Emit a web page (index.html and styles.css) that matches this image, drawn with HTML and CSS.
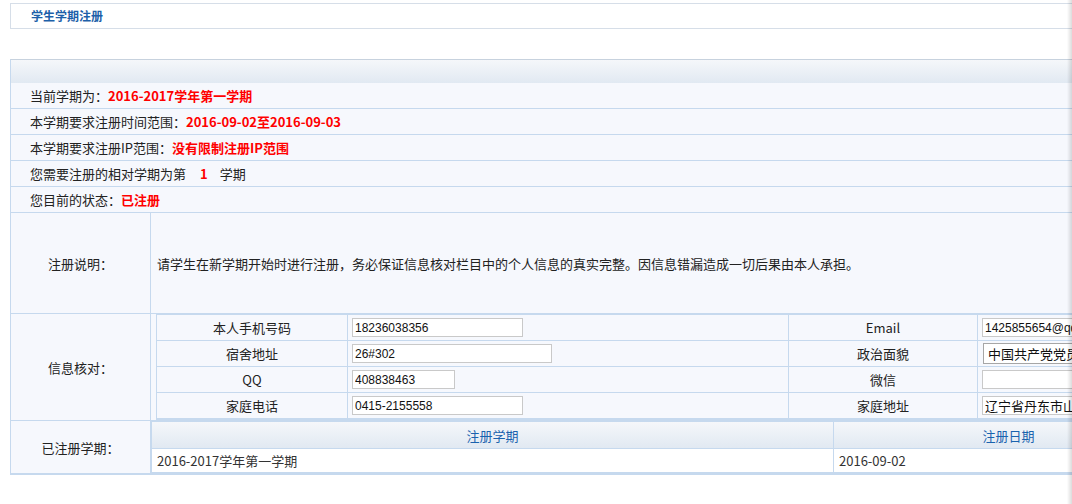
FILE: index.html
```html
<!DOCTYPE html>
<html lang="zh-CN">
<head>
  <meta charset="UTF-8">
  <title>学生学期注册</title>
  <link rel="stylesheet" href="styles.css">
</head>
<body>
  <div class="title-box">学生学期注册</div>

  <div class="panel">
    <div class="panel-head"></div>

    <div class="info-row">当前学期为：<span class="red">2016-2017学年第一学期</span></div>
    <div class="info-row">本学期要求注册时间范围：<span class="red">2016-09-02至2016-09-03</span></div>
    <div class="info-row">本学期要求注册IP范围：<span class="red">没有限制注册IP范围</span></div>
    <div class="info-row">您需要注册的相对学期为第<span class="red num">1</span>学期</div>
    <div class="info-row">您目前的状态：<span class="red">已注册</span></div>

    <div class="form-row note-row">
      <div class="form-label">注册说明：</div>
      <div class="form-body note-text">请学生在新学期开始时进行注册，务必保证信息核对栏目中的个人信息的真实完整。因信息错漏造成一切后果由本人承担。</div>
    </div>

    <div class="form-row">
      <div class="form-label">信息核对：</div>
      <div class="form-body check-wrap">
        <div class="check-grid">
          <div class="c-label">本人手机号码</div>
          <div class="c-field"><input class="txt w171" type="text" value="18236038356"></div>
          <div class="c-label">Email</div>
          <div class="c-field"><input class="txt w260" type="text" value="1425855654@qq.com"></div>

          <div class="c-label">宿舍地址</div>
          <div class="c-field"><input class="txt w200" type="text" value="26#302"></div>
          <div class="c-label">政治面貌</div>
          <div class="c-field"><select class="sel"><option>中国共产党党员</option></select></div>

          <div class="c-label">QQ</div>
          <div class="c-field"><input class="txt w103" type="text" value="408838463"></div>
          <div class="c-label">微信</div>
          <div class="c-field"><input class="txt w260" type="text" value=""></div>

          <div class="c-label">家庭电话</div>
          <div class="c-field"><input class="txt w171" type="text" value="0415-2155558"></div>
          <div class="c-label">家庭地址</div>
          <div class="c-field"><input class="txt w260 cjk" type="text" value="辽宁省丹东市山上街"></div>
        </div>
      </div>
    </div>

    <div class="form-row">
      <div class="form-label">已注册学期：</div>
      <div class="form-body">
        <div class="term-grid">
          <div class="t-head">注册学期</div>
          <div class="t-head">注册日期</div>
          <div class="t-cell">2016-2017学年第一学期</div>
          <div class="t-cell">2016-09-02</div>
        </div>
      </div>
    </div>
  </div>

  <div class="edge"></div>
</body>
</html>
```

FILE: styles.css
```css
body {
  margin: 0;
  font-family: "Noto Sans CJK SC", sans-serif;
  font-size: 13px;
  color: #222;
  background: #fff;
  overflow: hidden;
}

/* 标题栏 */
.title-box {
  margin: 3px 0 0 10px;
  width: 1400px;
  height: 24px;
  line-height: 24px;
  padding-left: 20px;
  border: 1px solid #d6dee8;
  color: #1d5fa9;
  font-size: 12px;
  font-weight: bold;
}

.panel {
  margin: 30px 0 0 10px;
  width: 1400px;
  border: 1px solid #c6d9ee;
  border-top-color: #c7d2de;
  border-right: none;
  background: #f6f8fd;
}

.panel-head {
  height: 23px;
  background: linear-gradient(#f5f7fa, #e1e9f2);
}

.info-row {
  height: 25px;
  line-height: 25px;
  padding-left: 19px;
  border-bottom: 1px solid #c6d9ee;
}

.red {
  color: #ff0000;
  font-weight: bold;
}

.num {
  padding: 0 12px 0 14px;
}

.form-row {
  display: flex;
  border-bottom: 1px solid #c6d9ee;
}

.form-label {
  width: 139px;
  flex: none;
  display: flex;
  align-items: center;
  justify-content: center;
  border-right: 1px solid #c6d9ee;
}

.form-body {
  flex: 1;
}

.note-row {
  height: 100px;
}

.note-text {
  display: flex;
  align-items: center;
  padding-left: 6px;
}

.check-wrap {
  padding-left: 5px;
}

/* 信息核对表 */
.check-grid {
  display: grid;
  grid-template-columns: 190px 440px 188px 400px;
  grid-auto-rows: 25px;
  gap: 1px;
  background: #c6d9ee;
  border: 1px solid #c6d9ee;
  border-right: none;
  border-bottom-width: 2px;
}

.c-label {
  background: #f6f8fd;
  display: flex;
  align-items: center;
  justify-content: center;
}

.c-field {
  background: #f6f8fd;
  display: flex;
  align-items: center;
  padding-left: 4px;
}

.txt {
  box-sizing: border-box;
  height: 19px;
  margin: 0;
  padding: 0 2px;
  border: 1px solid #c9c9c9;
  font-family: "Liberation Sans", sans-serif;
  font-size: 12px;
  color: #111;
  background: #fff;
  outline: none;
}

.txt.cjk {
  font-family: "Noto Sans CJK SC", sans-serif;
  font-size: 13px;
}

.w103 { width: 103px; }
.w171 { width: 171px; }
.w200 { width: 200px; }
.w260 { width: 260px; }

.sel {
  appearance: none;
  box-sizing: border-box;
  width: 260px;
  height: 21px;
  margin: 0 0 0 1px;
  padding: 0 4px;
  border: 1px solid #a6a6a6;
  background: #fff;
  font-family: "Noto Sans CJK SC", sans-serif;
  font-size: 13px;
  color: #111;
}

/* 已注册学期 */
.term-grid {
  display: grid;
  grid-template-columns: 681px 349px;
  grid-template-rows: 26px 23px;
  gap: 1px;
  background: #c6d9ee;
  border-left: 1px solid #c6d9ee;
  border-top: 1px solid #c6d9ee;
  border-bottom: 1px solid #c6d9ee;
}

.t-head {
  background: linear-gradient(#f5f7fa, #e1e9f2);
  color: #1a63ae;
  display: flex;
  align-items: center;
  justify-content: center;
}

.t-cell {
  background: #fff;
  color: #333;
  display: flex;
  align-items: center;
  padding-left: 5px;
}

.edge {
  position: fixed;
  top: 0;
  right: 0;
  bottom: 0;
  width: 5px;
  background: linear-gradient(to right, rgba(0, 0, 0, 0), rgba(0, 0, 0, 0.14));
}
```
